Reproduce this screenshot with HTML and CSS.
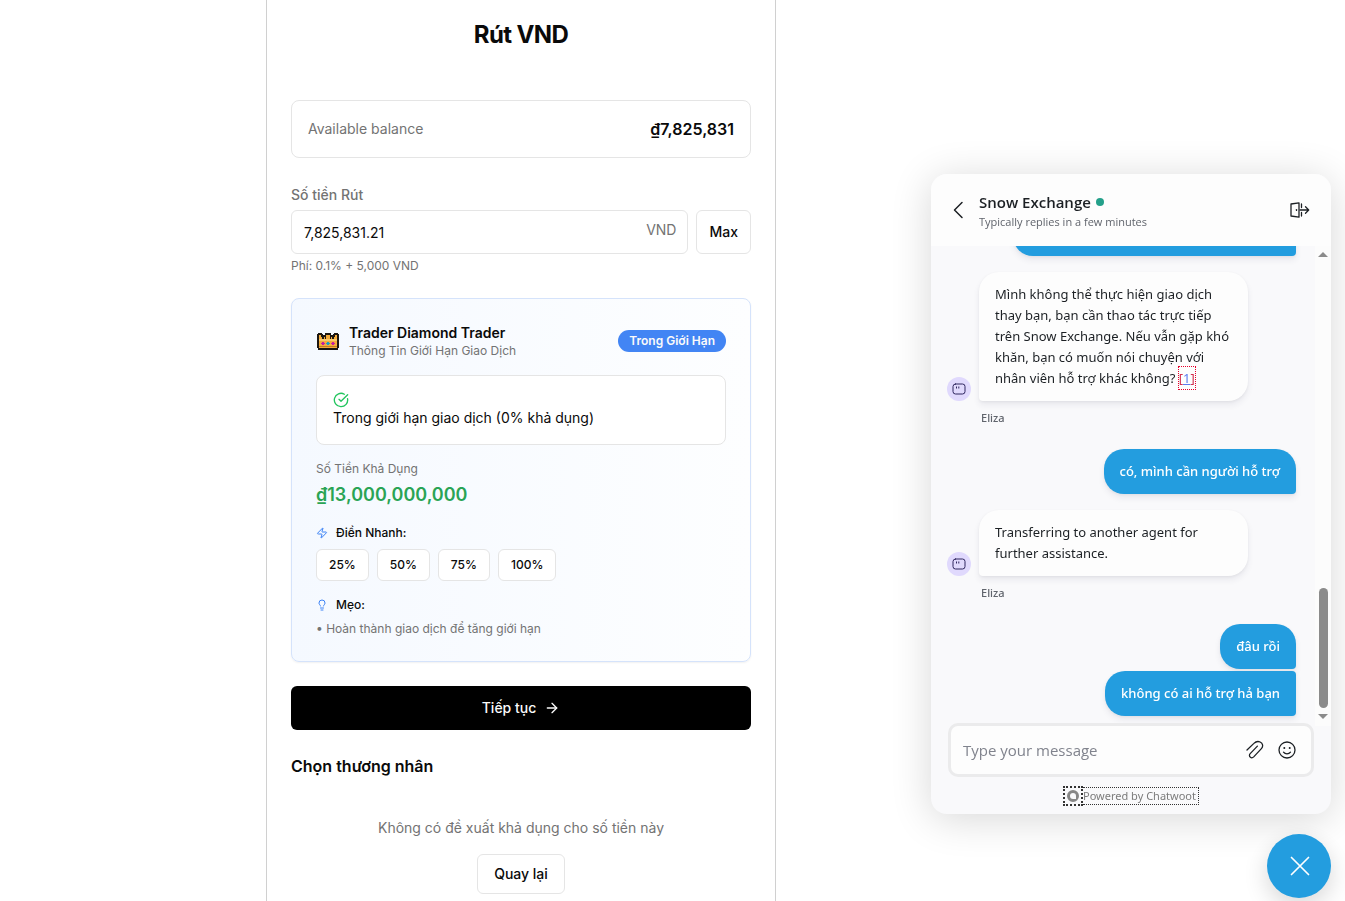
FILE: index.html
```html
<!DOCTYPE html>
<html lang="vi">
<head>
<meta charset="utf-8">
<meta name="viewport" content="width=device-width, initial-scale=1">
<title>Rút VND</title>
<link rel="stylesheet" href="styles.css">
</head>
<body>
<main class="page">
  <section class="panel">
    <h1 class="title">Rút VND</h1>

    <div class="balance">
      <span class="balance-label">Available balance</span>
      <strong class="balance-value">₫7,825,831</strong>
    </div>

    <div class="field">
      <label class="field-label" for="amount">Số tiền Rút</label>
      <div class="field-row">
        <div class="input-wrap">
          <input class="input" id="amount" type="text" value="7,825,831.21">
          <span class="input-unit">VND</span>
        </div>
        <button class="btn btn-max" type="button">Max</button>
      </div>
      <p class="fee">Phí: 0.1% + 5,000 VND</p>
    </div>

    <section class="limits">
      <header class="limits-head">
        <svg class="crown" viewBox="0 0 22 18" aria-hidden="true">
          <path fill="#1d1712" d="M1 1h4v1h1v1h2V1h6v2h2V2h1V1h4v1h1v14h-1v2H1v-2H0V2h1z"/>
          <path fill="#f5ad3c" d="M2 3h2v2h1v2h2V5h2V3h4v2h2v2h2V5h1V3h2v13H2z"/>
          <path fill="#fbc869" d="M2 7h18v2H2z"/>
          <path fill="#c57a22" d="M2 14h18v1H2z"/>
          <path fill="#1d1712" d="M5 4h1v2H5zM8 5h1v2H8zM13 5h1v2h-1zM16 4h1v2h-1zM10 2h2v1h-2z"/>
          <path fill="#c71fa0" d="M5 10h2v1h1v1H7v1H5v-1H4v-1h1zM15 10h2v1h1v1h-1v1h-2v-1h-1v-1h1z"/>
          <path fill="#1c9fc4" d="M10 10h2v1h1v1h-1v1h-2v-1H9v-1h1z"/>
        </svg>
        <div class="limits-names">
          <h2 class="limits-title">Trader Diamond Trader</h2>
          <p class="limits-sub">Thông Tin Giới Hạn Giao Dịch</p>
        </div>
        <span class="badge">Trong Giới Hạn</span>
      </header>

      <div class="alert">
        <svg class="icon-check" viewBox="0 0 24 24" aria-hidden="true"><path d="M21.8 10A10 10 0 1 1 17 3.335"/><path d="m9 11 3 3L22 4"/></svg>
        <p class="alert-text">Trong giới hạn giao dịch (0% khả dụng)</p>
      </div>

      <div class="available">
        <span class="small-label">Số Tiền Khả Dụng</span>
        <strong class="available-value">₫13,000,000,000</strong>
      </div>

      <div class="quick">
        <h3 class="mini-head">
          <svg class="icon-mini" viewBox="0 0 24 24" aria-hidden="true"><path d="M4 14a1 1 0 0 1-.78-1.63l9.900-10.200a.5.5 0 0 1 .86.46l-1.920 6.020A1 1 0 0 0 13 10h7a1 1 0 0 1 .78 1.630l-9.900 10.200a.5.5 0 0 1-.86-.46l1.920-6.020A1 1 0 0 0 11 14z"/></svg>
          Điền Nhanh:
        </h3>
        <div class="quick-row">
          <button class="btn btn-small" type="button">25%</button>
          <button class="btn btn-small" type="button">50%</button>
          <button class="btn btn-small" type="button">75%</button>
          <button class="btn btn-small" type="button">100%</button>
        </div>
      </div>

      <div class="tips">
        <h3 class="mini-head">
          <svg class="icon-mini" viewBox="0 0 24 24" aria-hidden="true"><path d="M15 14c.2-1 .7-1.7 1.5-2.5 1-.9 1.5-2.2 1.5-3.5A6 6 0 0 0 6 8c0 1 .2 2.2 1.5 3.5.7.7 1.3 1.5 1.5 2.5"/><path d="M9 18h6"/><path d="M10 22h4"/></svg>
          Mẹo:
        </h3>
        <p class="tip">• Hoàn thành giao dịch để tăng giới hạn</p>
      </div>
    </section>

    <button class="btn-primary" type="button">
      Tiếp tục
      <svg class="icon-arrow" viewBox="0 0 24 24" aria-hidden="true"><path d="M5 12h14"/><path d="m12 5 7 7-7 7"/></svg>
    </button>

    <h2 class="merchant-title">Chọn thương nhân</h2>
    <div class="empty">
      <p class="empty-text">Không có đề xuất khả dụng cho số tiền này</p>
      <button class="btn btn-back" type="button">Quay lại</button>
    </div>
  </section>
</main>

<aside class="widget">
  <section class="chat" aria-label="Snow Exchange">
    <header class="chat-head">
      <button class="icon-btn" type="button" aria-label="Back">
        <svg class="icon-back" viewBox="0 0 24 24" aria-hidden="true"><path d="M15 4.500 7.500 12l7.500 7.500"/></svg>
      </button>
      <div class="chat-names">
        <h2 class="chat-title">Snow Exchange <span class="online"></span></h2>
        <p class="chat-sub">Typically replies in a few minutes</p>
      </div>
      <button class="icon-btn" type="button" aria-label="End conversation">
        <svg class="icon-exit" viewBox="0 0 20 16" aria-hidden="true"><path d="M1 2 9 .8v14.400L1 14z"/><path d="M11.500 2v3.500M11.500 10.500V14M10 8h8.500M15.500 4.800 18.700 8l-3.200 3.200"/><path d="M6.500 7.600v.8"/></svg>
      </button>
    </header>

    <div class="chat-body">
      <div class="messages">
        <div class="mine"><div class="bubble bubble-mine bubble-cut"></div></div>

        <div class="agent">
          <span class="avatar"><svg class="icon-bot" viewBox="0 0 14 12" aria-hidden="true"><rect x="1" y="1" width="12" height="10" rx="2.500"/><path d="M4.500 3.900v1.200M6.800 3.900v1.200"/></svg></span>
          <div class="bubble bubble-agent">Mình không thể thực hiện giao dịch thay bạn, bạn cần thao tác trực tiếp trên Snow Exchange. Nếu vẫn gặp khó khăn, bạn có muốn nói chuyện với nhân viên hỗ trợ khác không? <span class="cite">[<a href="#">1</a>]</span></div>
          <span class="agent-name">Eliza</span>
        </div>

        <div class="mine"><div class="bubble bubble-mine">có, mình cần người hỗ trợ</div></div>

        <div class="agent">
          <span class="avatar"><svg class="icon-bot" viewBox="0 0 14 12" aria-hidden="true"><rect x="1" y="1" width="12" height="10" rx="2.500"/><path d="M4.500 3.900v1.200M6.800 3.900v1.200"/></svg></span>
          <div class="bubble bubble-agent">Transferring to another agent for further assistance.</div>
          <span class="agent-name">Eliza</span>
        </div>

        <div class="mine">
          <div class="bubble bubble-mine">đâu rồi</div>
          <div class="bubble bubble-mine bubble-next">không có ai hỗ trợ hả bạn</div>
        </div>
      </div>
      <div class="scrollbar" aria-hidden="true">
        <svg class="scroll-arrow" viewBox="0 0 10 5"><path d="M0 5 5 0l5 5z"/></svg>
        <span class="thumb"></span>
        <svg class="scroll-arrow" viewBox="0 0 10 5"><path d="m0 0 5 5 5-5z"/></svg>
      </div>
    </div>

    <footer class="chat-foot">
      <div class="composer">
        <input class="composer-input" type="text" placeholder="Type your message" aria-label="Type your message">
        <button class="icon-btn" type="button" aria-label="Attach file">
          <svg class="icon-tool" viewBox="0 0 20 20" aria-hidden="true"><path d="m2 10 6.900-6.600c1.700-1.700 4-2.400 6.200-1.400 2.700 1.200 3.400 4.300 1.300 6.600l-7.700 8.300c-1 1-2.500 1.100-3.500.2s-1-2.500 0-3.500l7.200-7.500"/></svg>
        </button>
        <button class="icon-btn" type="button" aria-label="Emoji">
          <svg class="icon-tool" viewBox="0 0 20 20" aria-hidden="true"><circle cx="10" cy="10" r="8"/><path d="M6.500 12.200c1.800 2.200 5.200 2.200 7 0"/><path class="eyes" d="M7.300 7.900v.1M12.700 7.900v.1"/></svg>
        </button>
      </div>
      <a class="powered" href="#">
        <svg class="brand" viewBox="0 0 12 12" aria-hidden="true"><path fill-rule="evenodd" d="M6 0a6 6 0 1 1 0 12A6 6 0 0 1 6 0zm0 3a3 3 0 1 0 0 6h3V6a3 3 0 0 0-3-3z"/></svg>
        <span class="powered-text">Powered by Chatwoot</span>
      </a>
    </footer>
  </section>

  <button class="launcher" type="button" aria-label="Close chat">
    <svg class="icon-close" viewBox="0 0 20 20" aria-hidden="true"><path d="m1.500 1.500 17 17M18.500 1.500l-17 17"/></svg>
  </button>
</aside>
</body>
</html>
```
FILE: styles.css
```css
* { box-sizing: border-box; }

body {
  margin: 0;
  background: #fff;
  color: #0a0a0a;
  font: 14px/20px Inter, "Liberation Sans", sans-serif;
}

h1, h2, h3, p { margin: 0; font-weight: inherit; font-size: inherit; }
button, input { font: inherit; color: inherit; margin: 0; }
button { cursor: pointer; }
svg { display: block; flex: none; fill: none; stroke: currentColor; stroke-linecap: round; stroke-linejoin: round; }

/* Withdraw panel */
.page {
  display: flex;
  justify-content: center;
  margin-right: 303px;
}

.panel {
  flex: 0 1 510px;
  min-height: calc(100vh + 8px);
  margin-top: -8px;
  padding: 26px 24px 0;
  border: 1px solid #d0d0d0;
  border-bottom: 0;
  border-radius: 8px 8px 0 0;
}

.title {
  font-size: 24px;
  line-height: 32px;
  font-weight: 700;
  letter-spacing: -0.025em;
  text-align: center;
}

.balance {
  display: flex;
  align-items: center;
  justify-content: space-between;
  margin-top: 49px;
  padding: 16px;
  border: 1px solid #e5e5e5;
  border-radius: 8px;
}
.balance-label { color: #737373; }
.balance-value { font-size: 16px; line-height: 24px; font-weight: 600; }

.field { margin-top: 27px; }
.field-label { display: block; color: #737373; font-weight: 500; }
.field-row { display: flex; gap: 8px; margin-top: 5px; }
.input-wrap { position: relative; flex: 1; }
.input {
  width: 100%;
  height: 44px;
  padding: 2px 48px 2px 12px;
  border: 1px solid #e5e5e5;
  border-radius: 6px;
  background: #fff;
  outline: 0;
}
.input-unit { position: absolute; top: 10px; right: 12px; color: #737373; }
.fee { margin-top: 4px; color: #737373; font-size: 12px; line-height: 16px; }

.btn {
  padding: 0 12px;
  border: 1px solid #e5e5e5;
  border-radius: 6px;
  background: #fff;
  font-weight: 500;
}
.btn-max { height: 44px; }
.btn-small { height: 32px; font-size: 12px; line-height: 16px; }
.btn-back { height: 40px; padding: 0 16px; }

.limits {
  display: flex;
  flex-direction: column;
  gap: 16px;
  margin-top: 24px;
  padding: 24px;
  border: 1px solid #d5e3fb;
  border-radius: 8px;
  background: linear-gradient(90deg, #f5f9ff, #fdfeff);
  box-shadow: 0 1px 2px rgba(0, 0, 0, 0.06);
}
.limits-head { display: flex; align-items: center; }
.crown { width: 22px; height: 18px; margin-left: 1px; stroke: none; }
.limits-names { flex: 1; margin-left: 10px; }
.limits-title { font-weight: 600; }
.limits-sub { color: #737373; font-size: 12px; line-height: 16px; }
.badge {
  padding: 3px 11px;
  border-radius: 11px;
  background: #4285f4;
  color: #fafafa;
  font-size: 12px;
  line-height: 16px;
  font-weight: 600;
}

.alert {
  padding: 16px;
  border: 1px solid #e5e5e5;
  border-radius: 8px;
  background: #fff;
}
.icon-check { width: 16px; height: 16px; color: #22c55e; stroke-width: 2; }

.available { display: flex; flex-direction: column; gap: 4px; }
.small-label { color: #737373; font-size: 12px; line-height: 16px; }
.available-value { color: #2aa455; font-size: 18px; line-height: 28px; font-weight: 600; }

.quick, .tips { display: flex; flex-direction: column; gap: 8px; }
.mini-head { display: flex; align-items: center; gap: 8px; font-size: 12px; line-height: 16px; font-weight: 500; }
.icon-mini { width: 12px; height: 12px; color: #3b82f6; stroke-width: 2; }
.quick-row { display: flex; gap: 8px; }
.tip { color: #737373; font-size: 12px; line-height: 16px; }

.btn-primary {
  display: flex;
  align-items: center;
  justify-content: center;
  gap: 8px;
  width: 100%;
  height: 44px;
  margin-top: 24px;
  border: 0;
  border-radius: 6px;
  background: #000;
  color: #fafafa;
  font-weight: 500;
}
.icon-arrow { width: 16px; height: 16px; stroke-width: 2; }

.merchant-title { margin-top: 24px; font-size: 16px; line-height: 24px; font-weight: 600; }
.empty { display: flex; flex-direction: column; align-items: center; gap: 16px; padding-top: 40px; }
.empty-text { color: #737373; }

/* Chat widget */
.widget {
  position: fixed;
  right: 14px;
  bottom: 3px;
  display: flex;
  flex-direction: column;
  align-items: flex-end;
  gap: 20px;
  color: #1c2024;
  font: 13px/21px "Noto Sans", "Open Sans", sans-serif;
}

.chat {
  display: flex;
  flex-direction: column;
  width: 400px;
  max-width: 100%;
  height: 640px;
  border-radius: 16px;
  background: #f9f9fb;
  box-shadow: 0 5px 40px rgba(0, 0, 0, 0.16);
  overflow: hidden;
}

.icon-btn { display: flex; padding: 0; border: 0; background: none; }

.chat-head { display: flex; align-items: center; padding: 16px 21px 16px 16px; background: #fdfdfd; }
.icon-back { width: 24px; height: 24px; stroke-width: 1.5; }
.chat-names { flex: 1; margin-left: 8px; font-family: "Open Sans", "Noto Sans", sans-serif; }
.chat-title { display: flex; align-items: center; gap: 5px; font-size: 15px; line-height: 24px; font-weight: 600; }
.online { width: 8px; height: 8px; border-radius: 4px; background: #24a08a; }
.chat-sub { color: #60646c; font-size: 11px; line-height: 16px; }
.icon-exit { width: 20px; height: 16px; stroke-width: 1.3; }

.chat-body { display: flex; flex: 1; min-height: 0; }
.messages {
  display: flex;
  flex: 1;
  flex-direction: column;
  justify-content: flex-end;
  padding: 0 19px 10px 16px;
  overflow: hidden;
}
.mine { display: flex; flex-direction: column; align-items: flex-end; gap: 2px; }
.bubble { padding: 12px 16px; border-radius: 20px; box-shadow: 0 4px 6px rgba(50, 50, 93, 0.08), 0 1px 3px rgba(0, 0, 0, 0.05); }
.bubble-mine { border-bottom-right-radius: 4px; background: #239ddf; color: #fff; font-weight: 500; }
.bubble-next { border-top-right-radius: 4px; }
.bubble-cut { width: 283px; height: 45px; }
.bubble-agent { border-bottom-left-radius: 4px; background: #fdfdfd; }
.agent {
  display: grid;
  grid-template-columns: 24px 269px;
  column-gap: 8px;
  align-items: end;
  margin: 16px 0 22px;
}
.avatar {
  display: flex;
  align-items: center;
  justify-content: center;
  width: 24px;
  height: 24px;
  border-radius: 12px;
  background: #e0d9fd;
  color: #2f265f;
}
.icon-bot { width: 14px; height: 12px; stroke-width: 1; }
.agent-name { grid-column: 2; margin: 8px 0 0 2px; color: #60646c; font-size: 11px; line-height: 18px; font-weight: 500; }
.cite { outline: 1px dotted #e5002b; padding: 2px 0; color: #d3304f; }
.cite a { color: #5b7cf0; }

.scrollbar {
  display: flex;
  flex-direction: column;
  align-items: center;
  width: 16px;
  padding: 6px 0 7px;
  background: #fcfcfc;
}
.scroll-arrow { width: 10px; height: 5px; fill: #8b8b8b; stroke: none; }
.thumb { width: 9px; height: 120px; margin: auto 0 6px; border-radius: 5px; background: #8b8b8b; }

.chat-foot { display: flex; flex-direction: column; align-items: center; padding: 0 20px 8px; font-family: "Open Sans", "Noto Sans", sans-serif; }
.composer {
  display: flex;
  align-items: center;
  gap: 12px;
  width: 100%;
  height: 48px;
  padding: 0 14px 0 12px;
  border-radius: 7px;
  background: #fdfdfd;
  box-shadow: 0 0 0 3px #ebebec;
}
.composer-input { flex: 1; min-width: 0; padding: 0; border: 0; outline: 0; background: none; font-size: 15px; line-height: 24px; }
.composer-input::placeholder { color: #80838d; opacity: 1; }
.icon-tool { width: 20px; height: 20px; stroke-width: 1.3; }
.eyes { stroke-width: 2; }

.powered { display: flex; align-items: center; margin-top: 12px; color: #7c7c7c; font-family: "Noto Sans", sans-serif; font-size: 11px; line-height: 16px; text-decoration: none; }
.brand { box-sizing: content-box; width: 12px; height: 12px; padding: 2px; border: 2px dotted #333; fill: #868686; stroke: none; }
.powered-text { padding-right: 2px; border: 1px dotted #333; border-left: 0; }

.launcher {
  display: flex;
  align-items: center;
  justify-content: center;
  width: 64px;
  height: 64px;
  padding: 0 0 0 2px;
  border: 0;
  border-radius: 32px;
  background: #239ddf;
  color: #fff;
  box-shadow: 0 8px 24px rgba(0, 0, 0, 0.16);
}
.icon-close { width: 20px; height: 20px; stroke-width: 1.7; }
```
